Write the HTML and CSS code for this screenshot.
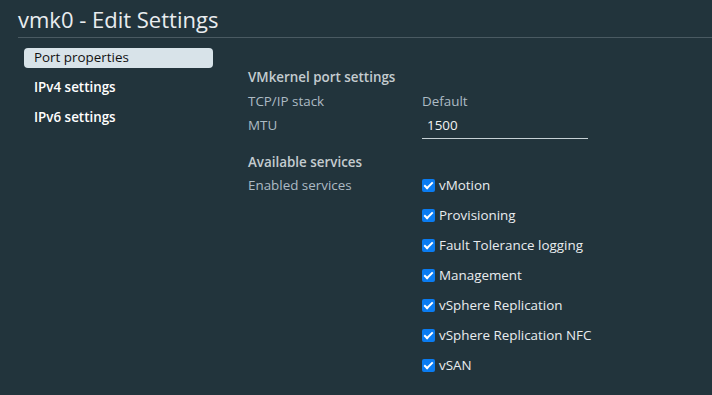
FILE: index.html
```html
<!DOCTYPE html>
<html lang="en">
<head>
    <meta charset="UTF-8">
    <title>vmk0 - Edit Settings</title>
    <link rel="stylesheet" href="styles.css">
</head>
<body>
    <div class="dialog">
        <h1 class="title">vmk0 - Edit Settings</h1>
        <div class="body">
            <nav class="side-nav">
                <a class="nav-item active">Port properties</a>
                <a class="nav-item">IPv4 settings</a>
                <a class="nav-item">IPv6 settings</a>
            </nav>
            <div class="content">
                <div class="section-head">VMkernel port settings</div>
                <div class="row">
                    <span class="label">TCP/IP stack</span>
                    <span class="value">Default</span>
                </div>
                <div class="row">
                    <span class="label">MTU</span>
                    <span class="input">1500</span>
                </div>
                <div class="section-head second">Available services</div>
                <div class="row services">
                    <span class="label">Enabled services</span>
                    <div class="checks">
                        <label class="check"><span class="box"></span>vMotion</label>
                        <label class="check"><span class="box"></span>Provisioning</label>
                        <label class="check"><span class="box"></span>Fault Tolerance logging</label>
                        <label class="check"><span class="box"></span>Management</label>
                        <label class="check"><span class="box"></span>vSphere Replication</label>
                        <label class="check"><span class="box"></span>vSphere Replication NFC</label>
                        <label class="check"><span class="box"></span>vSAN</label>
                    </div>
                </div>
            </div>
        </div>
    </div>
</body>
</html>
```

FILE: styles.css
```css
/* Base styling */
body {
    margin: 0;
    background-color: #22343c;
    font-family: 'Open Sans', sans-serif;
    color: #e9ecef;
}

.dialog {
    padding: 0 0 0 18px;
}

.title {
    margin: 0;
    padding-top: 5px;
    font-size: 22px;
    font-weight: 400;
    line-height: 28px;
    color: #e9ecef;
    border-bottom: 1px solid #4a5a62;
    padding-bottom: 4px;
}

.body {
    display: flex;
    padding-top: 10px;
}

/* Side navigation */
.side-nav {
    width: 189px;
    margin-left: 6px;
    display: flex;
    flex-direction: column;
    gap: 10px;
}

.nav-item {
    display: block;
    height: 20px;
    line-height: 19px;
    padding-left: 10px;
    font-size: 13.4px;
    font-weight: 600;
    color: #ffffff;
    border-radius: 4px;
}

.nav-item.active {
    background-color: #d8e3e9;
    color: #111;
    font-weight: 400;
}

/* Content */
.content {
    margin-left: 35px;
    padding-top: 20px;
    font-size: 13.4px;
}

.section-head {
    font-weight: 600;
    color: #c4ccd0;
    line-height: 18px;
}

.section-head.second {
    margin-top: 14px;
}

.row {
    display: flex;
    margin-top: 6px;
    line-height: 18px;
}

.label {
    width: 174px;
    color: #adbbc4;
}

.value {
    color: #adbbc4;
}

.input {
    width: 161px;
    padding-left: 5px;
    color: #f2f2f2;
    border-bottom: 1px solid #c6d0d5;
    padding-bottom: 4px;
}

.services {
    margin-top: 5px;
}

.checks {
    display: flex;
    flex-direction: column;
    gap: 12px;
}

.check {
    display: flex;
    align-items: center;
    color: #e9ecef;
}

.box {
    width: 13px;
    height: 13px;
    margin-right: 4px;
    border-radius: 2px;
    background-color: #0a7cf2;
    position: relative;
}

.box::after {
    content: "";
    position: absolute;
    left: 4px;
    top: 1px;
    width: 3px;
    height: 7px;
    border: solid #fff;
    border-width: 0 2px 2px 0;
    transform: rotate(45deg);
}
```
